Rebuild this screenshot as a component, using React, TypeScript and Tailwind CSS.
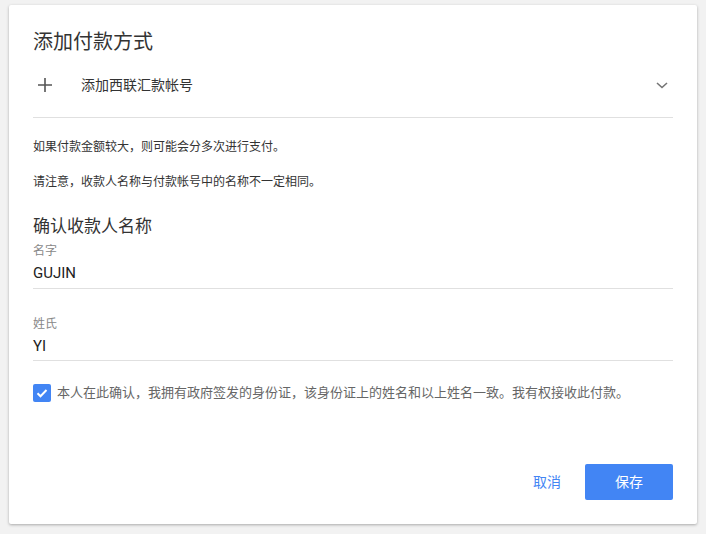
import React from "react";

export default function App() {
  return (
    <div
      className="w-[706px] h-[534px] bg-[#f2f2f2] pt-[5px] pl-[9px]"
      style={{ fontFamily: '"Roboto", "Noto Sans CJK SC", sans-serif' }}
    >
      <div className="w-[688px] h-[519px] bg-white shadow-[0_1px_3px_rgba(0,0,0,0.3)] rounded-[2px] px-[24px] flex flex-col">
        <div className="pt-[24px] text-[20px] leading-[26px] text-[#333]">添加付款方式</div>
        <div className="mt-[6px] pb-[8px] border-b border-[#e0e0e0]">
          <div className="h-[48px] flex items-center">
            <svg width="16" height="16" viewBox="0 0 16 16" className="ml-[4px]">
              <path d="M8 1v14M1 8h14" stroke="#555" strokeWidth="1.6" />
            </svg>
            <span className="ml-[28px] text-[14px] text-[#333]">添加西联汇款帐号</span>
            <svg width="14" height="14" viewBox="0 0 14 14" className="ml-auto mr-[4px]">
              <path d="M2 5l5 4.5L12 5" fill="none" stroke="#757575" strokeWidth="1.6" />
            </svg>
          </div>
        </div>
        <div className="mt-[20px] text-[12px] leading-[18px] text-[#333]">如果付款金额较大，则可能会分多次进行支付。</div>
        <div className="mt-[17px] text-[12px] leading-[18px] text-[#333]">请注意，收款人名称与付款帐号中的名称不一定相同。</div>
        <div className="mt-[24px] text-[17px] leading-[22px] text-[#333]">确认收款人名称</div>
        <div className="mt-[6px] text-[12px] leading-[16px] text-[#888]">名字</div>
        <div className="mt-[4px] pb-[5px] text-[15px] leading-[20px] text-[#222] border-b border-[#e0e0e0]">GUJIN</div>
        <div className="mt-[27px] text-[12px] leading-[16px] text-[#888]">姓氏</div>
        <div className="mt-[4px] pb-[4px] text-[15px] leading-[20px] text-[#222] border-b border-[#e0e0e0]">YI</div>
        <div className="mt-[22px] flex items-center">
          <div className="w-[18px] h-[18px] rounded-[2px] bg-[#4285f4] flex items-center justify-center">
            <svg width="14" height="14" viewBox="0 0 14 14">
              <path d="M2.5 7.2l3 3 6-6.2" fill="none" stroke="#fff" strokeWidth="2" />
            </svg>
          </div>
          <span className="ml-[6px] text-[13px] text-[#666]">
            本人在此确认，我拥有政府签发的身份证，该身份证上的姓名和以上姓名一致。我有权接收此付款。
          </span>
        </div>
        <div className="mt-auto mb-[24px] flex items-center justify-end">
          <span className="text-[14px] text-[#4285f4] mr-[24px]">取消</span>
          <div className="w-[88px] h-[36px] rounded-[2px] bg-[#4285f4] text-white text-[14px] flex items-center justify-center">
            保存
          </div>
        </div>
      </div>
    </div>
  );
}
